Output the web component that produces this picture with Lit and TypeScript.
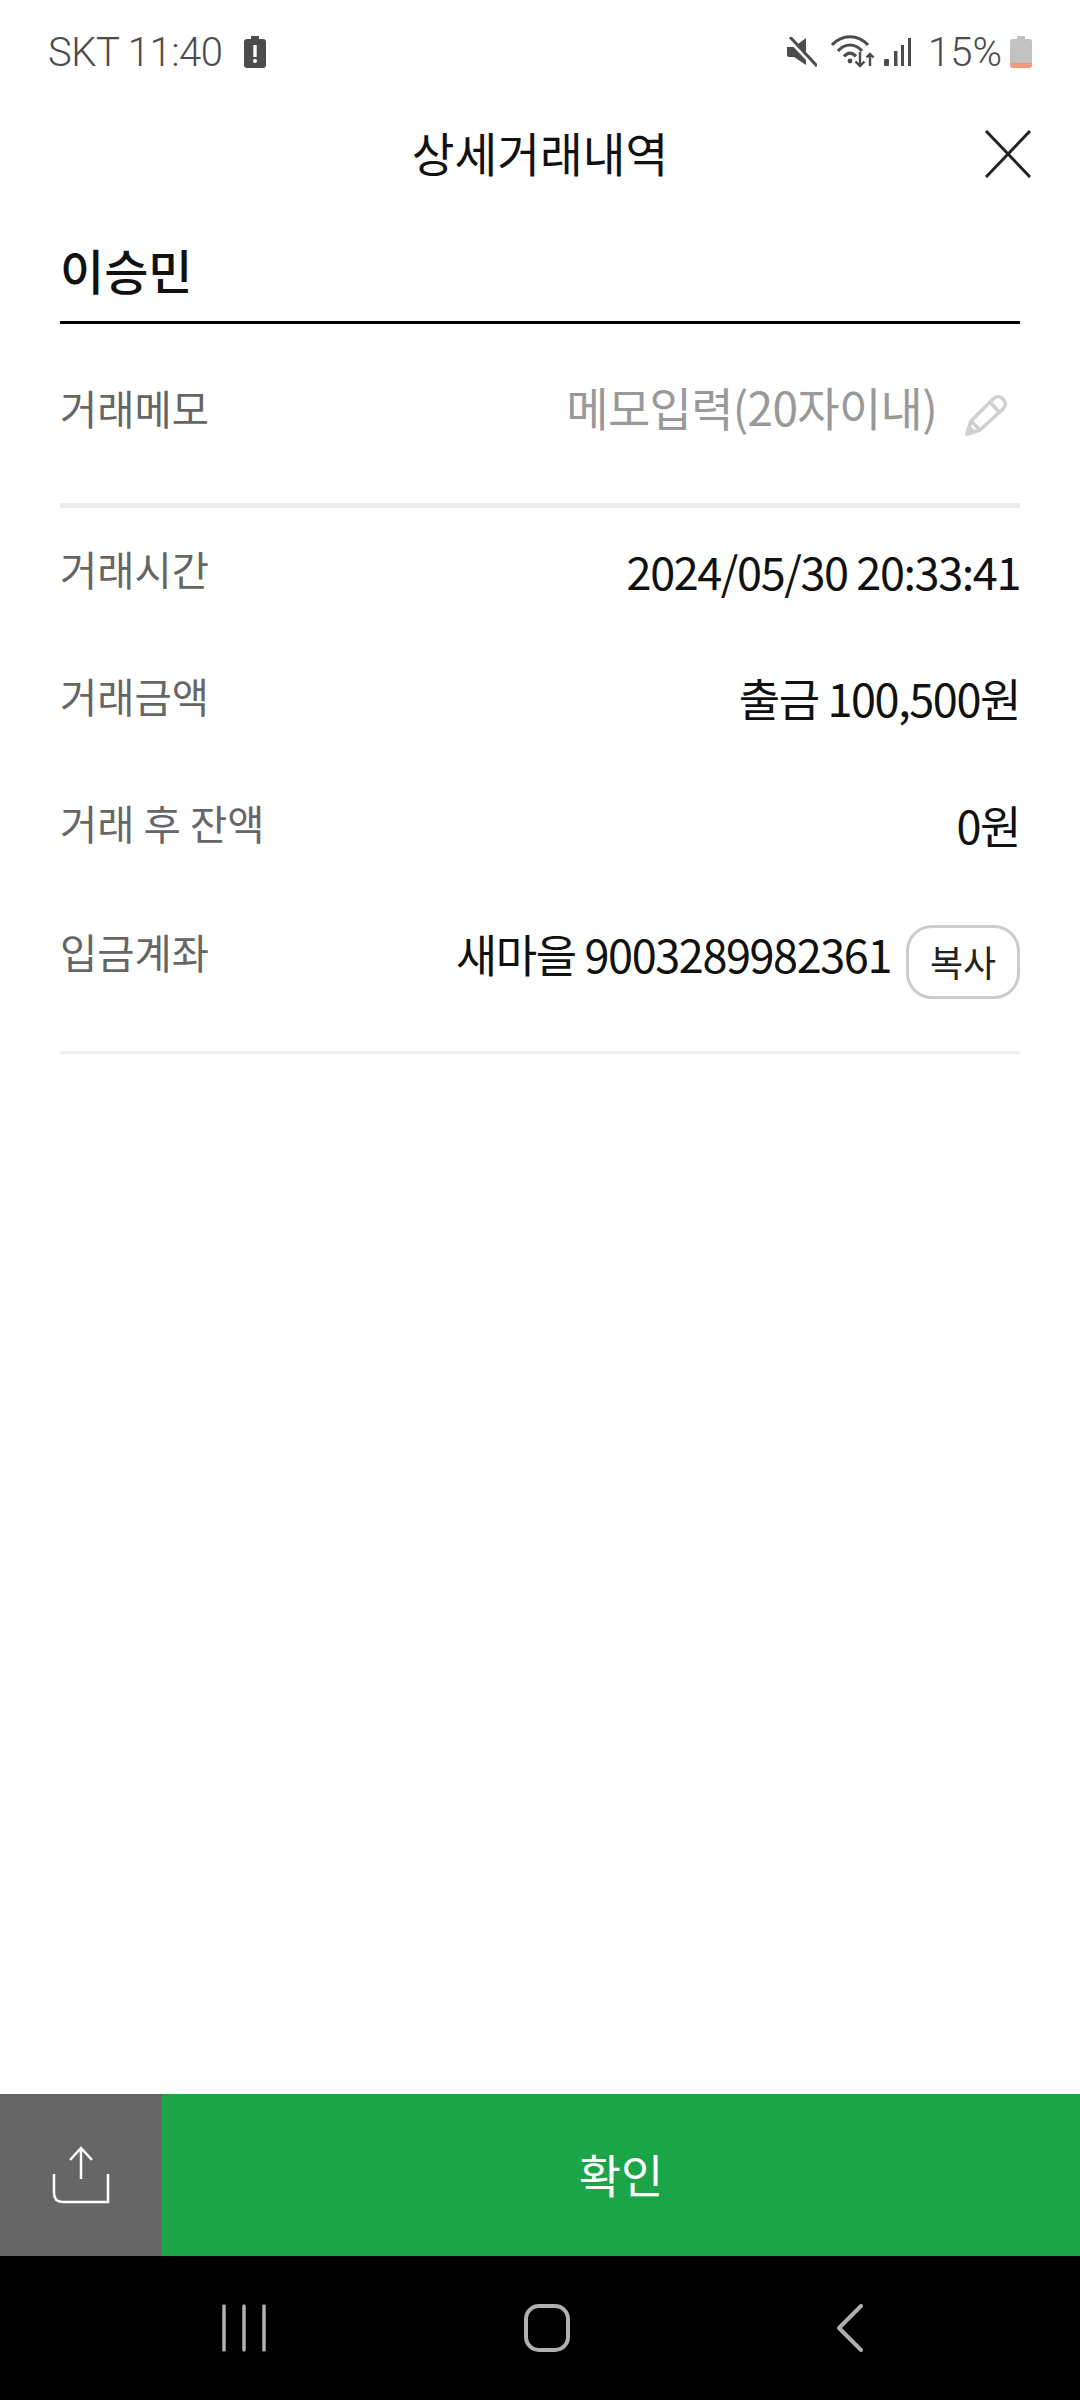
import { LitElement, html, css } from "lit";
import { customElement } from "lit/decorators.js";

@customElement("app-root")
export class AppRoot extends LitElement {
  static styles = css`
    :host {
      display: flex;
      flex-direction: column;
      width: 1080px;
      height: 2400px;
      background: #fff;
      font-family: "Noto Sans CJK KR", "Noto Sans", sans-serif;
      color: #111;
      overflow: hidden;
    }
    .status {
      height: 104px;
      display: flex;
      align-items: center;
      justify-content: space-between;
      padding: 0 48px 0 48px;
      color: #4c4c4c;
      font-family: Roboto, sans-serif;
      font-weight: 300;
      font-size: 40px;
      flex: none;
    }
    .st-left, .st-right { display: flex; align-items: center; }
    .st-left span { letter-spacing: -0.5px; }
    .st-left svg { margin-left: 21px; }
    .st-right svg { display: block; }
    .mute { margin-right: 14px; }
    .signal { margin: 0 17px 0 9px; }
    .batt { margin-left: 8px; }
    .header {
      height: 104px;
      flex: none;
      box-sizing: border-box;
      position: relative;
      display: flex;
      align-items: center;
      justify-content: center;
      font-size: 46.5px;
      line-height: 1;
      padding-bottom: 8px;
    }
    .close { position: absolute; right: 49px; top: 26px; }
    .body { flex: 1; padding: 0 60px; min-height: 0; }
    .name {
      height: 116px;
      box-sizing: border-box;
      border-bottom: 3px solid #000;
      font-size: 48px;
      font-weight: 500;
      line-height: 1;
      padding-top: 37px;
    }
    .memo {
      height: 184px;
      box-sizing: border-box;
      border-bottom: 5px solid #eee;
      display: flex;
      justify-content: space-between;
      padding-top: 56px;
    }
    .label { font-size: 40.5px; color: #666; line-height: 56px; }
    .memo-input { display: flex; color: #999; font-size: 46px; line-height: 60px; letter-spacing: -0.7px; margin-top: -4px; }
    .memo-input svg { margin: 18px 13px 0 28px; }
    .rows { padding-top: 29px; height: 546px; box-sizing: border-box; border-bottom: 3px solid #f0f0f0; }
    .row {
      height: 127px;
      display: flex;
      justify-content: space-between;
      padding-top: 4px;
      box-sizing: border-box;
    }
    .row.last { padding-top: 6px; }
    .value { font-size: 45px; line-height: 60px; letter-spacing: -1.4px; display: flex; align-items: flex-start; }
    .copy {
      width: 114px;
      height: 74px;
      box-sizing: border-box;
      border: 3px solid #ccc;
      border-radius: 26px;
      font-size: 36px;
      letter-spacing: 0;
      line-height: 66px;
      text-align: center;
      margin-left: 15px;
      margin-top: 1px;
      color: #222;
    }
    .actions { height: 162px; flex: none; display: flex; }
    .share { width: 162px; background: #666; display: flex; align-items: center; justify-content: center; }
    .ok {
      flex: 1;
      background: #1ba548;
      color: #fff;
      font-size: 46px;
      display: flex;
      align-items: center;
      justify-content: center;
    }
    .ok span { margin-bottom: 4px; }
    .nav {
      height: 144px;
      flex: none;
      box-sizing: border-box;
      background: #000;
      display: grid;
      grid-template-columns: repeat(3, 303px);
      justify-items: center;
      align-items: center;
      padding-left: 92px;
    }
    .nav svg { display: block; }
  `;

  render() {
    return html`
      <div class="status">
        <div class="st-left">
          <span>SKT 11:40</span>
          <svg width="24" height="34" viewBox="0 0 24 34">
            <path d="M8 1h8v3h4a3 3 0 0 1 3 3v23a3 3 0 0 1-3 3H4a3 3 0 0 1-3-3V7a3 3 0 0 1 3-3h4z" fill="#4c4c4c"/>
            <rect x="10.3" y="10" width="3.4" height="12" fill="#fff"/>
            <circle cx="12" cy="26" r="2" fill="#fff"/>
          </svg>
        </div>
        <div class="st-right">
          <svg class="mute" width="30" height="30" viewBox="0 0 30 30">
            <path d="M0 10h7l12-9v27L7 20H2a2 2 0 0 1-2-2z" fill="#4c4c4c"/>
            <path d="M1 1.500l27 28" stroke="#fff" stroke-width="4"/>
            <path d="M3 0l27 29" stroke="#4c4c4c" stroke-width="3"/>
          </svg>
          <svg width="44" height="36" viewBox="0 0 44 36" fill="none" stroke="#4c4c4c" stroke-width="3.2">
            <path d="M1 11C11 0 27 0 37 11"/>
            <path d="M7 17C14 9 24 9 31 17"/>
            <path d="M13 22.500C17 18 21 18 25 22.500"/>
            <circle cx="19" cy="27" r="2.4" fill="#4c4c4c" stroke="none"/>
            <path d="M29 18v14M24.500 27.500l4.500 4.500 4.500-4.500M39 32V20M35.500 23.500L39 20l3.500 3.500" stroke-width="2.4"/>
          </svg>
          <svg class="signal" width="27" height="28" viewBox="0 0 27 28" fill="#4c4c4c">
            <rect x="0" y="21" width="5" height="7" rx="1"/>
            <rect x="10" y="13" width="3.5" height="15"/>
            <rect x="17" y="7" width="3" height="21"/>
            <rect x="24" y="0" width="3" height="28"/>
          </svg>
          <span>15%</span>
          <svg class="batt" width="22" height="32" viewBox="0 0 22 32">
            <path d="M7 0h8v3h4a3 3 0 0 1 3 3v23a3 3 0 0 1-3 3H3a3 3 0 0 1-3-3V6a3 3 0 0 1 3-3h4z" fill="#c2c2c2"/>
            <path d="M0 27h22v2a3 3 0 0 1-3 3H3a3 3 0 0 1-3-3z" fill="#f29a7c"/>
          </svg>
        </div>
      </div>
      <div class="header">
        <span>상세거래내역</span>
        <svg class="close" width="46" height="48" viewBox="0 0 46 48" fill="none" stroke="#222" stroke-width="3">
          <path d="M1 1l44 46M45 1L1 47"/>
        </svg>
      </div>
      <div class="body">
        <div class="name">이승민</div>
        <div class="memo">
          <div class="label">거래메모</div>
          <div class="memo-input">
            <span>메모입력(20자이내)</span>
            <svg width="42" height="42" viewBox="0 0 42 42" fill="none" stroke="#d0d0d0" stroke-width="3.5" stroke-linejoin="round">
              <path d="M2 40l4-13L28 5c3-3 7-3 10 0s3 7 0 10L15 36z"/>
              <path d="M25 8l9 10M6 27l9 9"/>
              <path d="M2 40l2-7 5 5z" fill="#d0d0d0"/>
            </svg>
          </div>
        </div>
        <div class="rows">
          <div class="row"><div class="label">거래시간</div><div class="value">2024/05/30 20:33:41</div></div>
          <div class="row"><div class="label">거래금액</div><div class="value">출금 100,500원</div></div>
          <div class="row"><div class="label">거래 후 잔액</div><div class="value">0원</div></div>
          <div class="row last"><div class="label">입금계좌</div><div class="value">새마을 9003289982361<span class="copy">복사</span></div></div>
        </div>
      </div>
      <div class="actions">
        <div class="share">
          <svg width="58" height="58" viewBox="0 0 58 58" fill="none" stroke="#fff" stroke-width="2.5">
            <path d="M29 2v31M18 14L29 2l11 12"/>
            <path d="M2 28v19c0 6 3 9 9 9h45V28"/>
          </svg>
        </div>
        <div class="ok"><span>확인</span></div>
      </div>
      <div class="nav">
        <svg width="44" height="48" viewBox="0 0 44 48" stroke="#b0b0b0" stroke-width="3.5" stroke-linecap="round">
          <path d="M2 2v44M22 2v44M42 2v44"/>
        </svg>
        <svg width="46" height="48" viewBox="0 0 46 48" fill="none" stroke="#b0b0b0" stroke-width="4">
          <rect x="2" y="2" width="42" height="44" rx="13"/>
        </svg>
        <svg width="26" height="48" viewBox="0 0 26 48" fill="none" stroke="#b0b0b0" stroke-width="4" stroke-linecap="round" stroke-linejoin="round">
          <path d="M24 2L2 24l22 22"/>
        </svg>
      </div>
    `;
  }
}
